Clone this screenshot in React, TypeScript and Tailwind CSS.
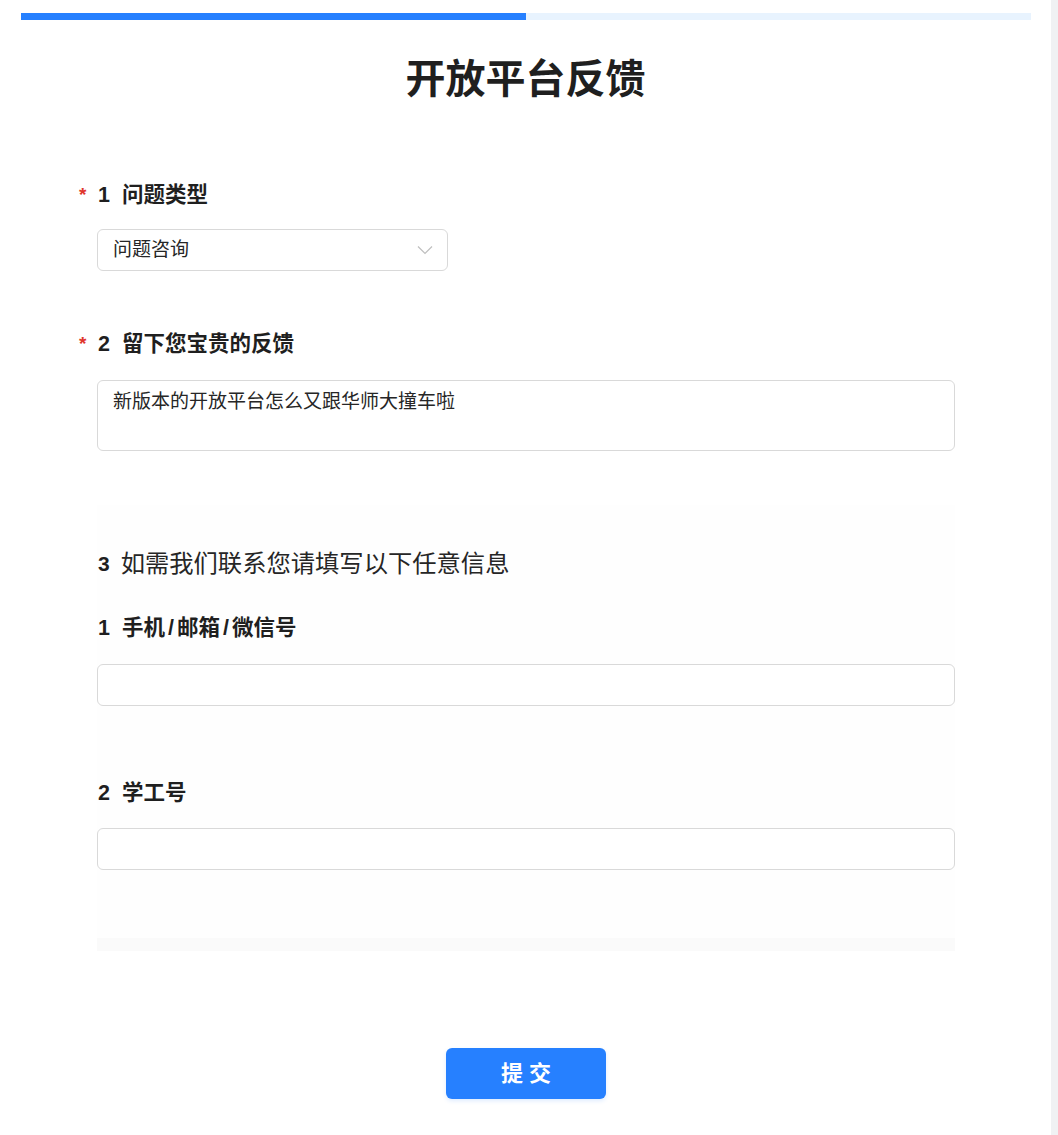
import React from "react";

const font = { fontFamily: '"Liberation Sans", "Noto Sans CJK SC", sans-serif' };

function Label({ num, text, required }: { num: string; text: string; required?: boolean }) {
  return (
    <div className="flex items-center h-[28px] ml-[79px] text-[21.5px] font-bold text-[#1f1f1f] leading-[28px]">
      <span className="w-[19px] text-[#e0362c] text-[19px] font-bold leading-[28px]">{required ? "*" : ""}</span>
      <span className="mr-[12px]">{num}</span>
      <span>{text}</span>
    </div>
  );
}

function SubLabel({ num, children }: { num: string; children: React.ReactNode }) {
  return (
    <div className="flex items-center h-[28px] text-[21.5px] font-bold text-[#1f1f1f] leading-[28px]">
      <span className="ml-[1px] mr-[12px]">{num}</span>
      <span className="flex items-center">{children}</span>
    </div>
  );
}

export default function App() {
  return (
    <div className="flex min-h-[1135px] bg-white" style={font}>
      <div className="w-[1051px] bg-white pt-[13px] pb-[37px]">
        <div className="ml-[21px] w-[1010px] h-[7px] bg-[#e8f3fe]">
          <div className="w-[505px] h-full bg-[#2680ff]" />
        </div>
        <h1 className="mt-[29px] h-[60px] leading-[60px] text-center text-[40px] font-bold text-[#1f1f1f]">
          开放平台反馈
        </h1>

        <div className="mt-[72px]">
          <Label num="1" text="问题类型" required />
        </div>
        <div className="mt-[20px] ml-[97px] w-[351px] h-[42px] border border-[#d9d9d9] rounded-[6px] flex items-center justify-between pl-[15px] pr-[14px]">
          <span className="text-[19px] text-[#262626]">问题咨询</span>
          <svg width="16" height="10" viewBox="0 0 16 10" fill="none">
            <path d="M1 1.5 L8 8.5 L15 1.5" stroke="#bfbfbf" strokeWidth="1.2" />
          </svg>
        </div>

        <div className="mt-[59px]">
          <Label num="2" text="留下您宝贵的反馈" required />
        </div>
        <div className="mt-[22px] ml-[97px] w-[858px] h-[71px] border border-[#d9d9d9] rounded-[6px] px-[15px] pt-[7px] text-[19px] text-[#262626] leading-[28px]">
          新版本的开放平台怎么又跟华师大撞车啦
        </div>

        <div className="mt-[54px] ml-[97px] w-[858px] bg-[#fefefe]">
          <div className="pt-[43px] flex items-center h-[75px] text-[24.3px] leading-[32px] text-[#262626]">
            <span className="ml-[1px] mr-[11px] font-bold text-[21px] text-[#1f1f1f]">3</span>
            <span>如需我们联系您请填写以下任意信息</span>
          </div>
          <div className="mt-[34px]">
            <SubLabel num="1">
              <span>手机</span>
              <span className="mx-[3px]">/</span>
              <span>邮箱</span>
              <span className="mx-[3px]">/</span>
              <span>微信号</span>
            </SubLabel>
          </div>
          <div className="mt-[22px] h-[42px] border border-[#d9d9d9] rounded-[6px] bg-white" />
          <div className="mt-[73px]">
            <SubLabel num="2">学工号</SubLabel>
          </div>
          <div className="mt-[21px] h-[42px] border border-[#d9d9d9] rounded-[6px] bg-white" />
          <div className="mt-[68px] h-[13px] bg-[#fafafa]" />
        </div>

        <div className="mt-[97px] flex justify-center">
          <button className="ml-[1px] w-[160px] h-[51px] rounded-[6px] bg-[#2680ff] text-white text-[22px] font-bold tracking-[6px] shadow-[0_2px_4px_rgba(38,128,255,0.15)]">
            <span className="ml-[6px]">提交</span>
          </button>
        </div>
      </div>
      <div className="w-[7px] bg-[#f0f1f3]" />
    </div>
  );
}
